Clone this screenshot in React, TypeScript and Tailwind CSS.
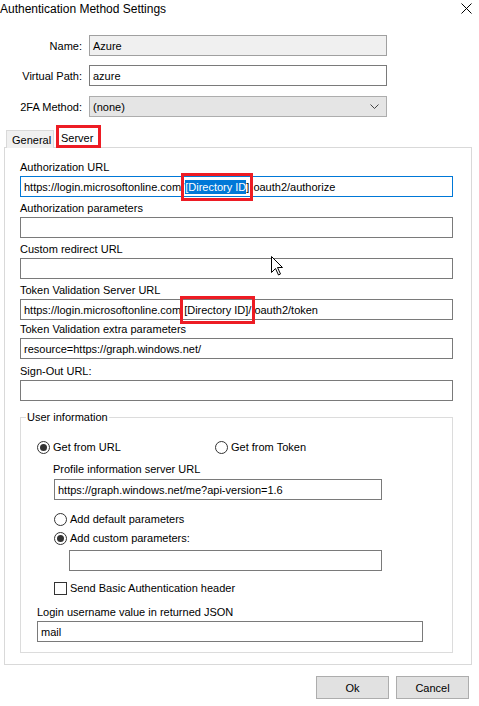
import React from 'react';

function Radio({ checked }: { checked?: boolean }) {
    return (
        <span className="w-[13px] h-[13px] rounded-full border border-[#333333] bg-white flex items-center justify-center shrink-0">
            {checked && <span className="w-[7px] h-[7px] rounded-full bg-[#333333]" />}
        </span>
    );
}

function Box({ className, children }: { className: string; children?: React.ReactNode }) {
    return (
        <div className={`h-[21px] border px-[3px] flex items-center whitespace-nowrap ${className}`}>
            {children}
        </div>
    );
}

export default function App() {
    return (
        <div className="w-[479px] h-[706px] bg-white relative overflow-hidden text-[11px] leading-[14px] text-black font-['Liberation_Sans',Arial,sans-serif]">
            {/* title bar */}
            <div className="h-[35px] flex justify-between">
                <div className="text-[12px] leading-[16px] pt-[1px]">Authentication Method Settings</div>
                <svg className="mt-[3px] mr-[7px]" width="11" height="11" viewBox="0 0 11 11">
                    <path d="M0.5 0.5 L10.5 10.5 M10.5 0.5 L0.5 10.5" stroke="#000" strokeWidth="1" />
                </svg>
            </div>

            {/* top form */}
            <div className="flex items-center">
                <div className="w-[82px] text-right">Name:</div>
                <Box className="ml-[7px] w-[298px] border-[#a0a0a0] bg-[#f0f0f0]">Azure</Box>
            </div>
            <div className="flex items-center mt-[9px]">
                <div className="w-[82px] text-right">Virtual Path:</div>
                <Box className="ml-[7px] w-[298px] border-[#7a7a7a] bg-white">azure</Box>
            </div>
            <div className="flex items-center mt-[10px]">
                <div className="w-[82px] text-right">2FA Method:</div>
                <Box className="ml-[7px] w-[298px] border-[#adadad] bg-[#e5e5e5] justify-between">
                    <span>(none)</span>
                    <svg width="9" height="5" viewBox="0 0 9 5" className="mr-[4px]">
                        <path d="M0.5 0.5 L4.5 4.5 L8.5 0.5" stroke="#444" fill="none" />
                    </svg>
                </Box>
            </div>

            {/* tabs */}
            <div className="relative z-10 mt-[8px] -mb-px h-[23px] flex items-end">
                <div className="ml-[6px] w-[48px] h-[18px] border border-b-0 border-[#d9d9d9] bg-[#f0f0f0] pl-[5px] pt-[3px] leading-[13px]">General</div>
                <div className="ml-[2px] w-[45px] h-[23px] border-[3px] border-[#ed1c24] bg-white pl-[2px] pt-[4px] leading-[13px]">Server</div>
            </div>

            {/* panel */}
            <div className="ml-[4px] w-[468px] h-[518px] border border-[#d9d9d9] pl-[15px] pt-[12px]">
                <div>Authorization URL</div>
                <Box className="mt-[2px] w-[433px] border-[#0078d7]">
                    <span>https://login.microsoftonline.com/</span>
                    <span className="outline-[3px] outline-solid outline-[#ed1c24] h-[22px] flex items-center px-[1px]">
                        <span className="bg-[#0078d7] text-white">[Directory ID</span>
                        <span>]</span>
                    </span>
                    <span className="pl-[3px]">oauth2/authorize</span>
                </Box>

                <div className="mt-[4px]">Authorization parameters</div>
                <Box className="mt-[2px] w-[433px] border-[#7a7a7a]" />

                <div className="mt-[4px]">Custom redirect URL</div>
                <Box className="mt-[2px] w-[433px] border-[#7a7a7a]" />

                <div className="mt-[4px]">Token Validation Server URL</div>
                <Box className="mt-[2px] w-[433px] border-[#7a7a7a]">
                    <span>https://login.microsoftonline.com</span>
                    <span className="outline-[3px] outline-solid outline-[#ed1c24] h-[22px] flex items-center ml-[2px] px-[1px]">[Directory ID]/</span>
                    <span className="pl-[2px]">oauth2/token</span>
                </Box>

                <div className="mt-[2px]">Token Validation extra parameters</div>
                <Box className="mt-[2px] w-[433px] border-[#7a7a7a]">resource=https://graph.windows.net/</Box>

                <div className="mt-[5px]">Sign-Out URL:</div>
                <Box className="mt-[2px] w-[433px] border-[#7a7a7a]" />

                <fieldset className="mt-[9px] w-[433px] border border-[#dcdcdc] pl-[16px] pb-[10px]">
                    <legend className="-ml-[11px] px-[1px] leading-[14px]">User information</legend>
                    <div className="mt-[16px] flex items-center h-[14px]">
                        <div className="w-[178px] flex items-center gap-[3px]">
                            <Radio checked />
                            <span>Get from URL</span>
                        </div>
                        <div className="flex items-center gap-[3px]">
                            <Radio />
                            <span>Get from Token</span>
                        </div>
                    </div>
                    <div className="ml-[16px] mt-[8px]">Profile information server URL</div>
                    <Box className="ml-[17px] mt-[3px] w-[328px] border-[#7a7a7a]">https://graph.windows.net/me?api-version=1.6</Box>
                    <div className="ml-[17px] mt-[12px] flex items-center gap-[3px] h-[14px]">
                        <Radio />
                        <span>Add default parameters</span>
                    </div>
                    <div className="ml-[17px] mt-[5px] flex items-center gap-[3px] h-[14px]">
                        <Radio checked />
                        <span>Add custom parameters:</span>
                    </div>
                    <Box className="ml-[32px] mt-[5px] w-[313px] border-[#7a7a7a]" />
                    <div className="ml-[17px] mt-[10px] flex items-center gap-[3px] h-[14px]">
                        <span className="w-[13px] h-[13px] border border-[#333333] bg-white" />
                        <span>Send Basic Authentication header</span>
                    </div>
                    <div className="mt-[10px]">Login username value in returned JSON</div>
                    <Box className="mt-[2px] w-[386px] border-[#7a7a7a]">mail</Box>
                </fieldset>
            </div>

            {/* buttons */}
            <div className="mt-[11px] flex justify-end gap-[7px] pr-[10px]">
                <button type="button" className="w-[73px] h-[23px] bg-[#e1e1e1] border border-[#adadad]">Ok</button>
                <button type="button" className="w-[73px] h-[23px] bg-[#e1e1e1] border border-[#adadad]">Cancel</button>
            </div>

            {/* mouse pointer */}
            <svg className="absolute left-[271px] top-[256px]" width="13" height="20" viewBox="0 0 13 20">
                <path d="M0.5 0.5 L0.5 16.5 L4.5 12.5 L7.5 19 L9.5 18 L6.5 11.5 L11.5 11.5 Z" fill="#fff" stroke="#000" strokeWidth="1" strokeLinejoin="miter" />
            </svg>
        </div>
    );
}
